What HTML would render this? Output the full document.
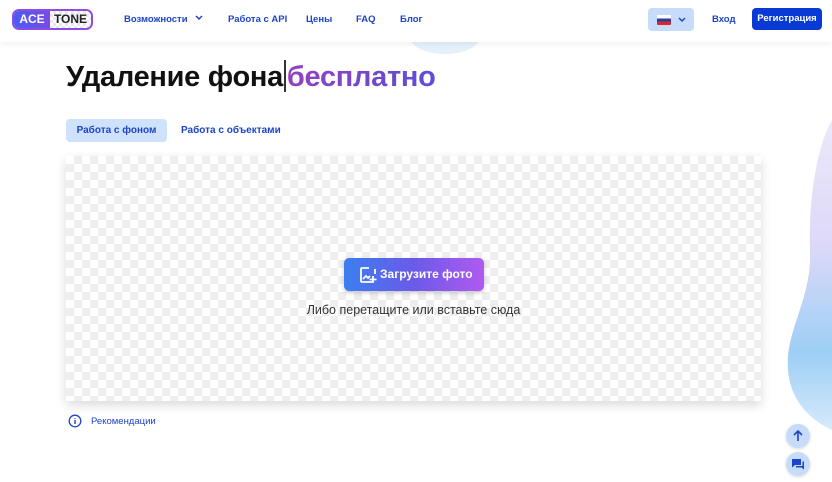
<!DOCTYPE html><html><head><meta charset="utf-8"><style>
*{margin:0;padding:0;box-sizing:border-box}
body{width:832px;height:482px;overflow:hidden;background:#fff;font-family:"Liberation Sans",sans-serif;position:relative}
.hdr{position:absolute;left:0;top:0;width:832px;height:42px;background:#fff;box-shadow:0 2px 6px rgba(0,0,0,.06);z-index:3}
.nav{position:absolute;top:14px;font-size:9.5px;font-weight:bold;color:#1d44c9}
.logo{position:absolute;left:12px;top:9px;width:81px;height:21px;border-radius:7px;border:2px solid #8b4de8;overflow:hidden;display:flex}
.logo .a{background:linear-gradient(90deg,#4a5cf0,#7a4ae8);color:#fff;width:36px;font-weight:bold;font-size:12px;line-height:17px;text-align:center}
.logo .b{flex:1;font-weight:bold;font-size:12px;line-height:17px;color:#222;text-align:center;background:repeating-conic-gradient(#e8e8f0 0 25%,#fff 0 50%) 0 0/6px 6px}
h1{position:absolute;left:66px;top:60px;font-size:29px;font-weight:bold;color:#111;letter-spacing:-.3px}
h1 span{background:linear-gradient(90deg,#9440c0,#5a4ed8);-webkit-background-clip:text;color:transparent}
.canvas{position:absolute;left:66px;top:156px;width:695px;height:245px;background:repeating-conic-gradient(#eee 0 25%,#fff 0 50%) 0 0/16px 16px;box-shadow:0 4px 10px rgba(0,0,0,.15)}
.btn{position:absolute;left:278px;top:102px;width:140px;height:33px;border-radius:5px;background:linear-gradient(90deg,#3b7ff0,#6b5ae8 50%,#b05af0);color:#fff;font-weight:bold;font-size:12px;line-height:33px;padding-left:36px;box-shadow:0 2px 4px rgba(0,0,0,.2)}
.circ{position:absolute;left:786px;width:24px;height:24px;border-radius:50%;background:#c6dcfa;box-shadow:0 1px 3px rgba(0,0,0,.15)}
</style></head><body>
<div class="hdr">
<div class="logo"><div class="a">ACE</div><div class="b">TONE</div></div>
<div class="nav" style="left:124px">Возможности <svg width="10" height="8" viewBox="0 0 10 8" style="margin-left:4px"><path d="M2 2l3 3 3-3" stroke="#1d44c9" stroke-width="1.5" fill="none"/></svg></div>
<div class="nav" style="left:228px">Работа с API</div>
<div class="nav" style="left:306px">Цены</div>
<div class="nav" style="left:356px">FAQ</div>
<div class="nav" style="left:400px">Блог</div>
<div style="position:absolute;left:648px;top:8px;width:46px;height:23px;border-radius:4px;background:#c6dcfa">
<div style="position:absolute;left:9px;top:7px;width:14px;height:10px;background:linear-gradient(#fff 0 33%,#2a3fa0 33% 66%,#d42a2a 66%);border-radius:1px"></div>
<svg width="10" height="8" viewBox="0 0 10 8" style="position:absolute;left:29px;top:8px"><path d="M2 2l3 3 3-3" stroke="#1d44c9" stroke-width="1.5" fill="none"/></svg></div>
<div class="nav" style="left:712px">Вход</div>
<div style="position:absolute;left:752px;top:8px;width:70px;height:22px;border-radius:4px;background:#0a3ad6;color:#fff;font-size:9.5px;font-weight:bold;line-height:22px;text-align:center">Регистрация</div>
</div>
<div style="position:absolute;left:410px;top:20px;width:70px;height:34px;border-radius:50%;background:#e6f0fb;z-index:1"></div>
<svg style="position:absolute;left:780px;top:100px" width="52" height="340" viewBox="0 0 52 340"><defs><linearGradient id="g" x1="0" y1="0" x2="0" y2="1"><stop offset="0" stop-color="#e8e4fa"/><stop offset=".4" stop-color="#d7d2f6"/><stop offset=".75" stop-color="#8cc6f4"/><stop offset="1" stop-color="#cfe6fb"/></linearGradient></defs><path d="M52 20C40 40 28 90 30 150C32 200 5 230 8 270C10 300 30 320 52 330Z" fill="url(#g)" opacity=".85"/></svg>
<h1>Удаление фона<span style="display:inline-block;width:2px;height:32px;background:#333;vertical-align:-6px;margin:0 1px;-webkit-background-clip:border-box"></span><span>бесплатно</span></h1>
<div style="position:absolute;left:66px;top:119px;width:101px;height:23px;border-radius:4px;background:#cfe2fc;color:#1d44c9;font-size:10px;font-weight:bold;line-height:23px;text-align:center">Работа с фоном</div>
<div style="position:absolute;left:181px;top:125px;color:#1d44c9;font-size:10px;font-weight:bold">Работа с объектами</div>
<div class="canvas">
<div class="btn"><svg width="18" height="18" viewBox="0 0 18 18" style="position:absolute;left:15px;top:8px"><path d="M10 2H3a1 1 0 0 0-1 1v12a1 1 0 0 0 1 1h10M4 13l3-3 2 2 2-2" stroke="#fff" stroke-width="1.8" fill="none"/><path d="M14 10v7M10.5 13.5h7" stroke="#fff" stroke-width="1.8"/><path d="M16 8V3" stroke="#fff" stroke-width="1.8"/></svg>Загрузите фото</div>
<div style="position:absolute;left:0;width:695px;top:147px;text-align:center;font-size:12.5px;color:#333">Либо перетащите или вставьте сюда</div>
</div>
<svg style="position:absolute;left:68px;top:414px" width="14" height="14" viewBox="0 0 14 14"><circle cx="7" cy="7" r="5.8" stroke="#1d44c9" stroke-width="1.3" fill="none"/><path d="M7 6v4M7 4v.8" stroke="#1d44c9" stroke-width="1.4"/></svg>
<div style="position:absolute;left:91px;top:416px;font-size:9.5px;color:#1d44c9">Рекомендации</div>
<div class="circ" style="top:424px"><svg width="24" height="24" viewBox="0 0 24 24"><path d="M12 17V7M8 11l4-4 4 4" stroke="#1d44c9" stroke-width="1.6" fill="none"/></svg></div>
<div class="circ" style="top:452px"><svg width="24" height="24" viewBox="0 0 24 24"><path d="M6 7h9v6H9l-3 2.5z" fill="#1d44c9"/><path d="M16.5 9.5H18v8l-2.5-2H10v-1.5h6.5z" fill="#1d44c9"/></svg></div>
</body></html>
